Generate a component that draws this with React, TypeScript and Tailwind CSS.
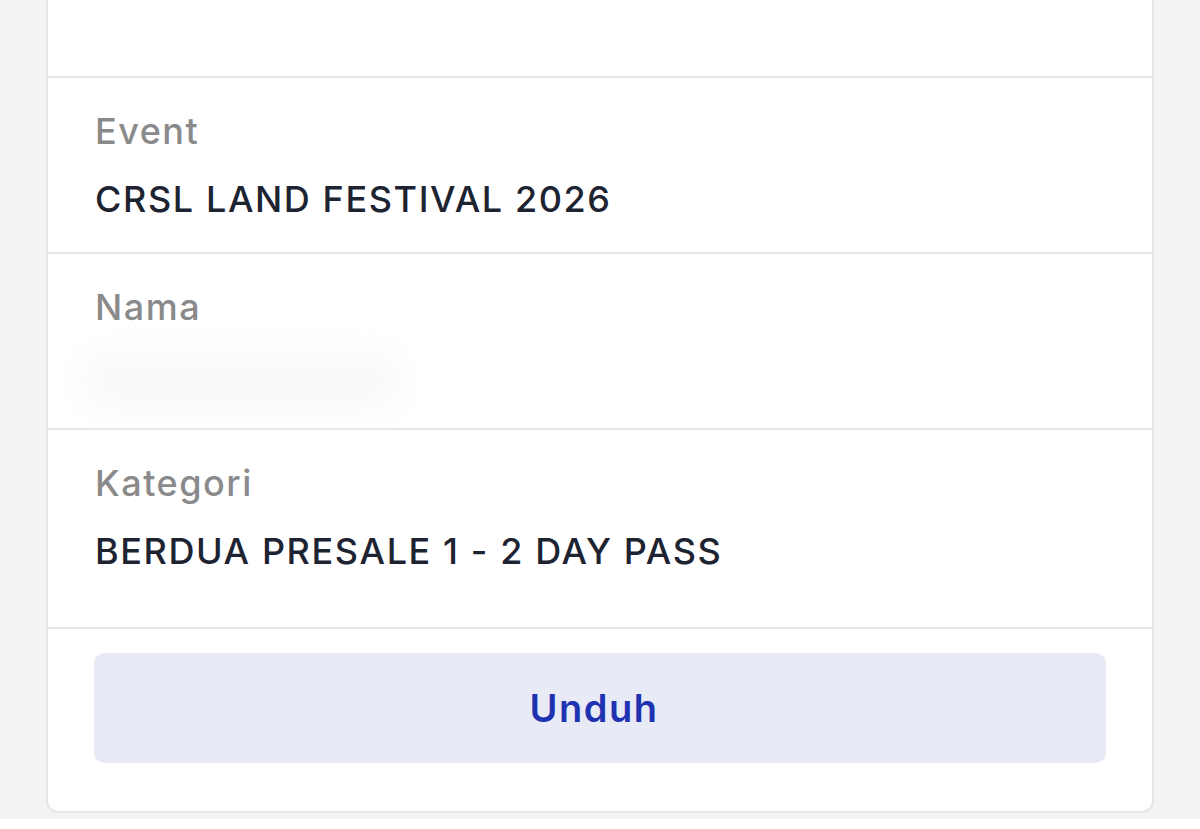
function Field({ label, value, extra }: { label: string; value?: string; extra?: string }) {
  return (
    <div className={`flex flex-col gap-[20px] border-b-2 border-[#e6e6e6] px-[47px] pt-[29px] ${extra ?? "pb-[29px]"}`}>
      <div className="text-[36px] leading-[48px] font-medium tracking-[1.5px] text-[#8a8a8a]">{label}</div>
      {value ? (
        <div className="text-[36px] leading-[48px] font-medium tracking-[1.6px] text-[#1d2330]">{value}</div>
      ) : (
        <div className="relative h-[48px]">
          <div className="absolute -left-[14px] top-[0px] h-[60px] w-[320px] rounded-full bg-[#f9f9f9] blur-lg" />
        </div>
      )}
    </div>
  );
}

export default function App() {
  return (
    <div className="min-h-screen bg-[#f3f3f3] font-['Inter',sans-serif] px-[46px]">
      <div className="-mt-[10px] rounded-b-[12px] border-2 border-t-0 border-[#e6e6e6] bg-white">
        <div className="h-[88px] border-b-2 border-[#e6e6e6]" />
        <Field label="Event" value="CRSL LAND FESTIVAL 2026" />
        <Field label="Nama" />
        <Field label="Kategori" value="BERDUA PRESALE 1 - 2 DAY PASS" extra="pb-[52px]" />
        <div className="px-[46px] pt-[24px] pb-[48px]">
          <button className="flex h-[110px] w-full items-center justify-center rounded-[10px] bg-[#e8eaf6] pr-[12px] text-[38px] font-semibold tracking-[1.5px] text-[#1f33b2]">
            Unduh
          </button>
        </div>
      </div>
    </div>
  );
}
